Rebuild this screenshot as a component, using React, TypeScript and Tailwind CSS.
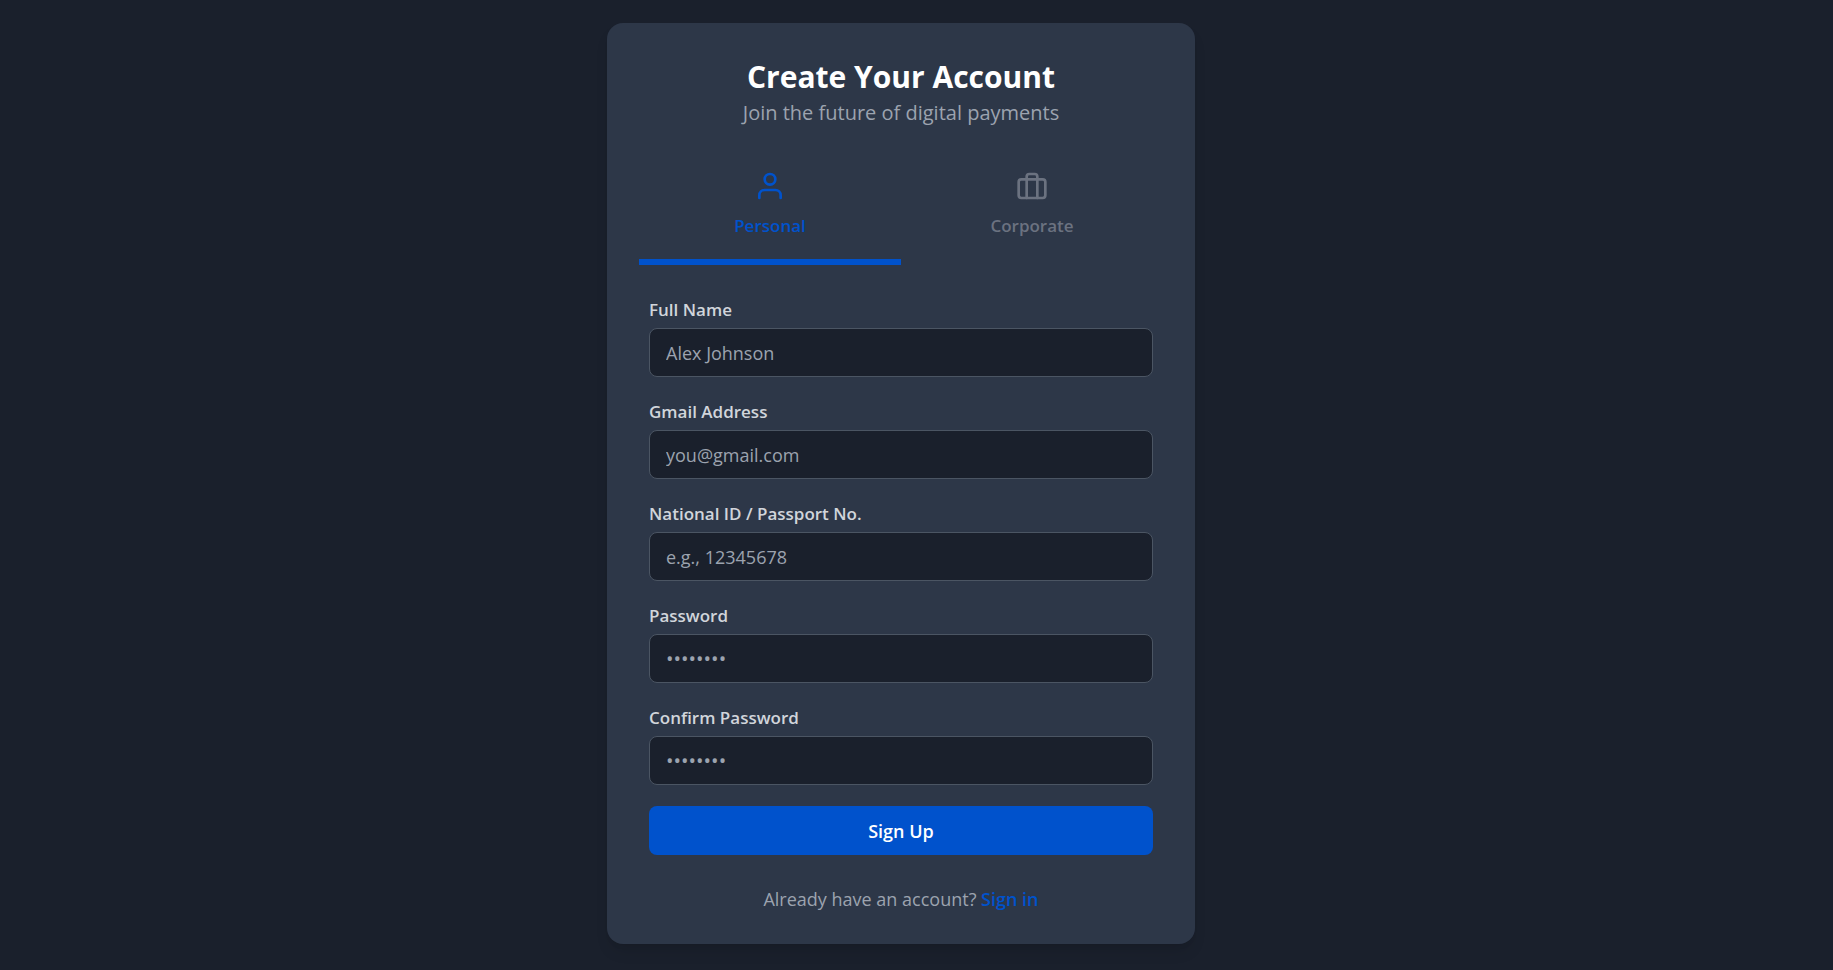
import { useState } from "react";

const fields = [
  { id: "name", label: "Full Name", type: "text", placeholder: "Alex Johnson" },
  { id: "email", label: "Gmail Address", type: "email", placeholder: "you@gmail.com" },
  { id: "national-id", label: "National ID / Passport No.", type: "text", placeholder: "e.g., 12345678" },
  { id: "password", label: "Password", type: "password", placeholder: "••••••••" },
  { id: "confirm", label: "Confirm Password", type: "password", placeholder: "••••••••" },
];

function UserIcon() {
  return (
    <svg className="size-8" viewBox="0 0 24 24" fill="none" stroke="currentColor" strokeWidth="2" strokeLinecap="round" strokeLinejoin="round" aria-hidden="true">
      <path d="M20 21v-2a4 4 0 0 0-4-4H8a4 4 0 0 0-4 4v2" />
      <circle cx="12" cy="7" r="4" />
    </svg>
  );
}

function CaseIcon() {
  return (
    <svg className="size-8" viewBox="0 0 24 24" fill="none" stroke="currentColor" strokeWidth="2" strokeLinecap="round" strokeLinejoin="round" aria-hidden="true">
      <rect x="2" y="7" width="20" height="14" rx="2" ry="2" />
      <path d="M16 21V5a2 2 0 0 0-2-2h-4a2 2 0 0 0-2 2v16" />
    </svg>
  );
}

const tabs = [
  { id: "personal", label: "Personal", Icon: UserIcon },
  { id: "corporate", label: "Corporate", Icon: CaseIcon },
];

export default function App() {
  const [active, setActive] = useState("personal");
  return (
    <div className="flex min-h-screen justify-center bg-[#1a202c] py-[23px] pr-[31px] font-['Open_Sans','Noto_Sans',sans-serif]">
      <main className="w-full max-w-[588px] self-start rounded-2xl bg-[#2d3748] px-8 pt-8 pb-[31px] shadow-lg">
        <header className="text-center">
          <h1 className="text-[30px] leading-[44px] font-bold text-white">Create Your Account</h1>
          <p className="text-xl leading-7 text-[#9ca3af]">Join the future of digital payments</p>
        </header>

        <div role="tablist" className="mt-6 grid grid-cols-2">
          {tabs.map(({ id, label, Icon }) => (
            <button
              key={id}
              type="button"
              role="tab"
              aria-selected={active === id}
              onClick={() => setActive(id)}
              className={
                active === id
                  ? "flex flex-col items-center gap-[10px] border-b-[6px] border-[#0052cc] pt-[19px] pb-[19px] text-[17px] leading-7 font-semibold text-[#0052cc]"
                  : "flex flex-col items-center gap-[10px] border-b-[6px] border-transparent pt-[19px] pb-[19px] text-[17px] leading-7 font-semibold text-[#6b7280]"
              }
            >
              <Icon />
              {label}
            </button>
          ))}
        </div>

        <form className="mt-[31px] px-[10px]" onSubmit={(e) => e.preventDefault()}>
          {fields.map((f) => (
            <div key={f.id} className="mb-[21px]">
              <label htmlFor={f.id} className="block pb-1 text-[17px] leading-7 font-semibold text-[#d1d5db]">
                {f.label}
              </label>
              <input
                id={f.id}
                type={f.type}
                placeholder={f.placeholder}
                className={
                  f.type === "password"
                    ? "block h-[49px] w-full rounded-lg border border-[#4b5563] bg-[#1a202c] px-4 text-xl text-white outline-none placeholder:text-[#9ca3af] focus:border-[#0052cc]"
                    : "block h-[49px] w-full rounded-lg border border-[#4b5563] bg-[#1a202c] px-4 text-lg text-white outline-none placeholder:text-[#9ca3af] focus:border-[#0052cc]"
                }
              />
            </div>
          ))}
          <button type="submit" className="h-[49px] w-full rounded-lg bg-[#0052cc] text-lg font-semibold text-white">
            Sign Up
          </button>
        </form>

        <p className="mt-[30px] text-center text-lg leading-7 text-[#9ca3af]">
          Already have an account?{" "}
          <a href="#signin" className="font-semibold text-[#0052cc]">Sign in</a>
        </p>
      </main>
    </div>
  );
}
